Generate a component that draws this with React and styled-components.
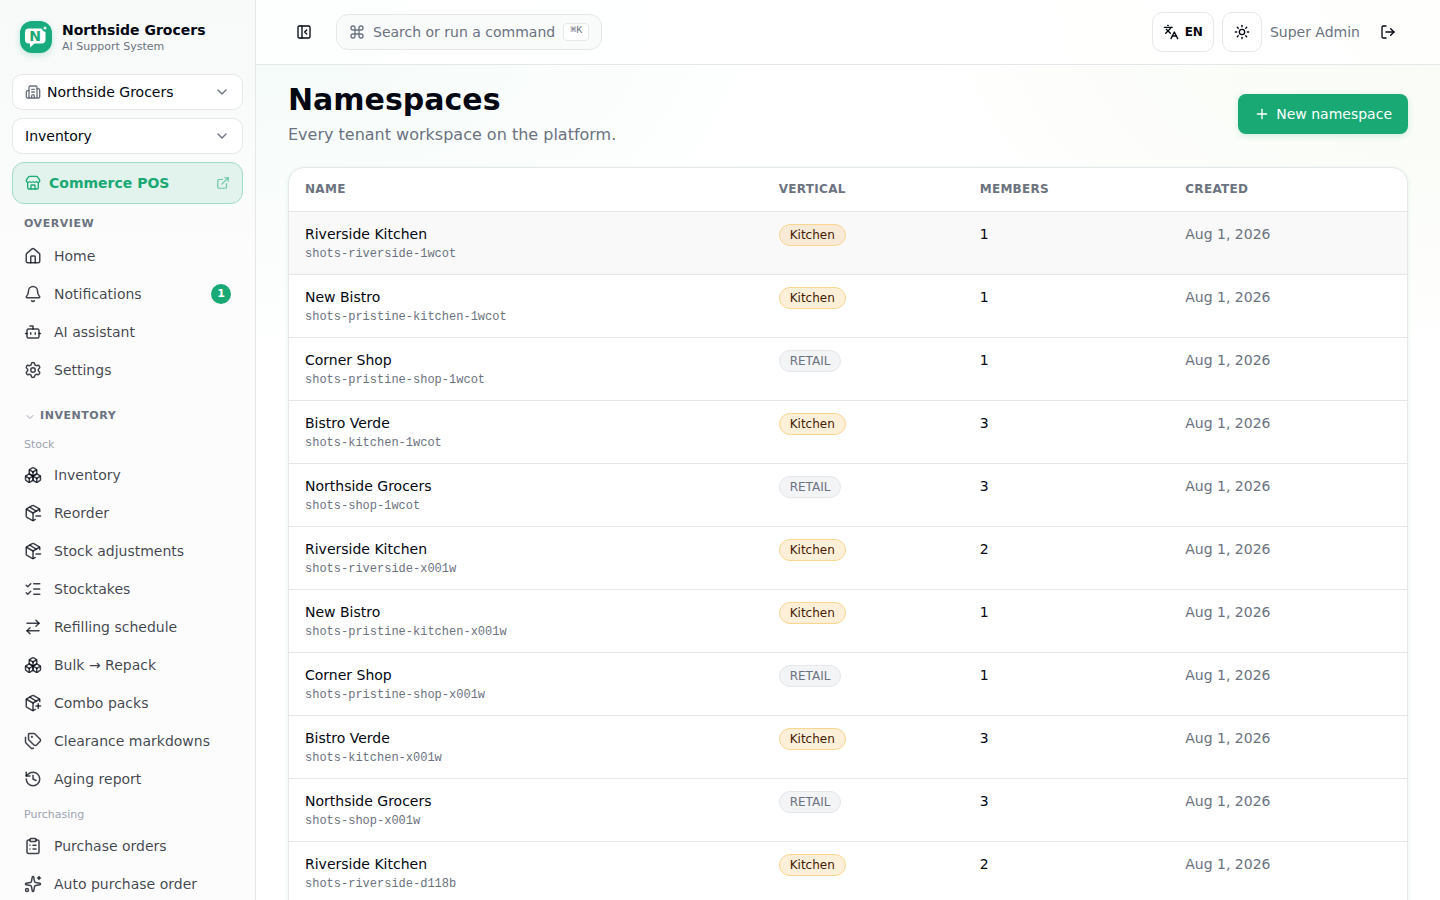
import React from 'react';
import styled, { createGlobalStyle, css } from 'styled-components';
import {
  ArrowRightLeft,
  Bell,
  Bot,
  Boxes,
  Building2,
  ChevronDown,
  ClipboardList,
  Command,
  ExternalLink,
  History,
  House,
  Languages,
  ListChecks,
  LogOut,
  PackageMinus,
  PackagePlus,
  PanelLeftClose,
  Plus,
  Settings,
  Sparkles,
  Store,
  Sun,
} from 'lucide-react';

const colors = {
  ink: '#030712',
  nav: 'rgba(3, 7, 18, 0.76)',
  muted: '#6b7280',
  faint: '#9ca3af',
  line: '#e5e7eb',
  green: '#18a974',
};

const GlobalStyle = createGlobalStyle`
  *, *::before, *::after {
    box-sizing: border-box;
  }
  body {
    margin: 0;
    color: ${colors.ink};
    background: #fff;
    font-family: 'DejaVu Sans', sans-serif;
    font-size: 14px;
    line-height: 20px;
  }
  button, select {
    font: inherit;
    color: inherit;
    cursor: pointer;
  }
  svg {
    display: block;
    flex-shrink: 0;
  }
`;

const Shell = styled.div`
  display: grid;
  grid-template-columns: 256px minmax(0, 1fr);
  height: 100vh;
  overflow: hidden;
`;

const Sidebar = styled.aside`
  display: flex;
  flex-direction: column;
  gap: 8px;
  padding: 12px;
  overflow-y: auto;
  scrollbar-width: none;
  border-right: 1px solid ${colors.line};
  background: linear-gradient(180deg, #f7faf9 0, #fcfcfc 256px);
`;

const Brand = styled.div`
  display: flex;
  align-items: center;
  gap: 10px;
  padding: 8px 8px 12px;
`;

const LogoMark = styled.svg`
  border-radius: 12px;
  box-shadow: 0 2px 6px rgba(24, 169, 116, 0.25);
`;

const BrandName = styled.div`
  font-weight: 700;
`;

const BrandNote = styled.div`
  color: ${colors.muted};
  font-size: 11px;
  line-height: 14px;
`;

const Picker = styled.label`
  display: grid;
  grid-template-columns: auto minmax(0, 1fr) auto;
  align-items: center;
  height: 36px;
  flex-shrink: 0;
  border: 1px solid ${colors.line};
  border-radius: 10px;
  background: #fff;
  color: ${colors.muted};
  > svg {
    grid-row: 1;
    pointer-events: none;
  }
  > svg:first-child {
    grid-column: 1;
    margin-left: 12px;
  }
  > svg:last-child {
    grid-column: 3;
    margin-right: 12px;
  }
`;

const PickerSelect = styled.select`
  grid-row: 1;
  grid-column: 1 / -1;
  height: 34px;
  padding: 0 36px 0 ${({ $icon }) => ($icon ? '34px' : '12px')};
  border: 0;
  border-radius: 10px;
  background: transparent;
  color: ${colors.ink};
  appearance: none;
`;

const PosLink = styled.a`
  display: flex;
  align-items: center;
  gap: 8px;
  height: 42px;
  flex-shrink: 0;
  padding: 0 12px;
  border: 1px solid #a3dcc7;
  border-radius: 12px;
  background: #e2f2ec;
  color: ${colors.green};
  font-weight: 700;
  text-decoration: none;
  > svg:last-child {
    margin-left: auto;
    opacity: 0.6;
  }
`;

const Nav = styled.nav`
  display: flex;
  flex-direction: column;
`;

const groupTitle = css`
  color: ${colors.muted};
  font-size: 11px;
  font-weight: 700;
  line-height: 16px;
  letter-spacing: 0.05em;
  text-transform: uppercase;
`;

const NavTitle = styled.h2`
  ${groupTitle}
  margin: 4px 12px 6px;
`;

const NavToggle = styled.button`
  ${groupTitle}
  display: flex;
  align-items: center;
  gap: 4px;
  margin: 20px 12px 0;
  padding: 0;
  border: 0;
  background: none;
  svg {
    margin-top: 2px;
    color: ${colors.faint};
  }
`;

const NavSubtitle = styled.h3`
  margin: 0 12px;
  padding: ${({ $first }) => ($first ? '13px 0 4px' : '10px 0 5px')};
  color: ${colors.faint};
  font-size: 11px;
  font-weight: 400;
  line-height: 16px;
`;

const NavList = styled.ul`
  display: flex;
  flex-direction: column;
  gap: 2px;
  margin: 0;
  padding: 0;
  list-style: none;
`;

const NavLink = styled.a`
  display: flex;
  align-items: center;
  gap: 12px;
  height: 36px;
  padding: 0 12px;
  border-radius: 10px;
  color: ${colors.nav};
  text-decoration: none;
`;

const Count = styled.span`
  min-width: 20px;
  margin-left: auto;
  border-radius: 10px;
  background: ${colors.green};
  color: #fff;
  font-size: 11px;
  font-weight: 700;
  text-align: center;
`;

const Page = styled.div`
  display: flex;
  flex-direction: column;
  min-width: 0;
  min-height: 0;
  background:
    radial-gradient(560px 380px at 0 0, rgba(24, 169, 116, 0.05), transparent),
    radial-gradient(560px 380px at 100% 0, rgba(130, 190, 70, 0.06), transparent),
    #fff;
`;

const TopBar = styled.header`
  display: flex;
  align-items: center;
  gap: 16px;
  height: 65px;
  flex-shrink: 0;
  padding: 0 32px;
  border-bottom: 1px solid ${colors.line};
  background: rgba(255, 255, 255, 0.8);
`;

const IconButton = styled.button`
  display: flex;
  align-items: center;
  justify-content: center;
  width: ${({ $small }) => ($small ? '32px' : '40px')};
  height: ${({ $small }) => ($small ? '32px' : '40px')};
  padding: 0;
  border: 1px solid ${({ $outlined }) => ($outlined ? colors.line : 'transparent')};
  border-radius: 10px;
  background: ${({ $outlined }) => ($outlined ? '#fff' : 'transparent')};
`;

const LanguageButton = styled(IconButton)`
  gap: 6px;
  width: auto;
  padding: 0 10px;
  font-size: 12px;
  font-weight: 700;
`;

const SearchButton = styled.button`
  display: flex;
  align-items: center;
  gap: 8px;
  height: 36px;
  padding: 0 12px;
  border: 1px solid ${colors.line};
  border-radius: 12px;
  background: #f9fbfa;
  color: ${colors.muted};
`;

const Shortcut = styled.kbd`
  height: 18px;
  padding: 0 6px;
  border: 1px solid ${colors.line};
  border-radius: 4px;
  background: #fff;
  font-family: 'Liberation Mono', monospace;
  font-size: 10px;
  line-height: 14px;
`;

const TopActions = styled.div`
  display: flex;
  align-items: center;
  gap: 8px;
  margin-left: auto;
  color: ${colors.ink};
`;

const UserName = styled.span`
  color: ${colors.muted};
`;

const Main = styled.main`
  flex: 1;
  min-height: 0;
  padding: 16px 32px 32px;
  overflow-y: auto;
  scrollbar-width: none;
`;

const PageHead = styled.div`
  display: flex;
  align-items: center;
  justify-content: space-between;
  margin-bottom: 20px;
`;

const Title = styled.h1`
  margin: 0 0 4px;
  font-size: 30px;
  line-height: 38px;
`;

const Lead = styled.p`
  margin: 0;
  color: ${colors.muted};
  font-size: 16px;
  line-height: 24px;
`;

const PrimaryButton = styled.button`
  display: flex;
  align-items: center;
  gap: 6px;
  height: 40px;
  padding: 0 16px;
  border: 0;
  border-radius: 8px;
  background: ${colors.green};
  color: #fff;
  box-shadow: 0 2px 6px rgba(24, 169, 116, 0.2);
`;

const TableCard = styled.div`
  padding-bottom: 16px;
  overflow: hidden;
  border: 1px solid ${colors.line};
  border-radius: 16px;
  background: #fff;
  box-shadow: 0 1px 4px rgba(24, 169, 116, 0.12);
`;

const Table = styled.table`
  width: 100%;
  border-collapse: collapse;
  text-align: left;
`;

const HeadCell = styled.th`
  height: 43px;
  padding: 0 16px;
  border-bottom: 1px solid ${colors.line};
  color: ${colors.muted};
  font-size: 12px;
  letter-spacing: 0.025em;
  text-transform: uppercase;
`;

const Row = styled.tr`
  border-bottom: 1px solid ${colors.line};
  background: ${({ $active }) => ($active ? '#f9f9f9' : '#fff')};
`;

const Cell = styled.td`
  padding: 12px 16px;
  color: ${({ $muted }) => ($muted ? colors.muted : colors.ink)};
  vertical-align: top;
`;

const Slug = styled.div`
  margin-top: 2px;
  color: ${colors.muted};
  font-family: 'Liberation Mono', monospace;
  font-size: 12px;
  line-height: 16px;
`;

const Badge = styled.span`
  display: inline-block;
  padding: 2px 10px;
  border: 1px solid ${({ $kitchen }) => ($kitchen ? '#fad691' : colors.line)};
  border-radius: 11px;
  background: ${({ $kitchen, $active }) =>
    $kitchen ? ($active ? '#f8ead7' : '#fef0d8') : '#f3f4f6'};
  color: ${({ $kitchen }) => ($kitchen ? '#451a03' : colors.muted)};
  font-size: 12px;
  line-height: 16px;
  vertical-align: top;
`;

const Logo = () => (
  <LogoMark width="32" height="32" viewBox="0 0 32 32" aria-hidden="true">
    <rect width="32" height="32" fill="#18ab80" />
    <path
      d="M9 7.500h12.500a5 5 0 0 0 4 3.500V18.500a4 4 0 0 1-4 4H14.500L10 26.500V22.500H9a4 4 0 0 1-4-4v-7a4 4 0 0 1 4-4z"
      fill="#fff"
    />
    <circle cx="25" cy="7" r="1.600" fill="#d4f3e6" />
    <text
      x="15"
      y="20"
      fill="#18a974"
      fontFamily="DejaVu Sans, sans-serif"
      fontSize="14"
      fontWeight="700"
      textAnchor="middle"
    >
      N
    </text>
  </LogoMark>
);

const PriceTags = ({ size }) => (
  <svg
    width={size}
    height={size}
    viewBox="0 0 24 24"
    fill="none"
    stroke="currentColor"
    strokeWidth="2"
    strokeLinecap="round"
    strokeLinejoin="round"
    aria-hidden="true"
  >
    <path d="M13.172 2a2 2 0 0 1 1.414.586l6.710 6.710a2.400 2.400 0 0 1 0 3.408l-4.592 4.592a2.400 2.400 0 0 1-3.408 0l-6.710-6.710A2 2 0 0 1 6 9.172V3a1 1 0 0 1 1-1z" />
    <path d="M2 7v6.172a2 2 0 0 0 .586 1.414l6.710 6.710a2.400 2.400 0 0 0 3.191.193" />
    <circle cx="10.500" cy="6.500" r=".5" fill="currentColor" />
  </svg>
);

const overview = [
  { label: 'Home', icon: House },
  { label: 'Notifications', icon: Bell, count: 1 },
  { label: 'AI assistant', icon: Bot },
  { label: 'Settings', icon: Settings },
];

const stock = [
  { label: 'Inventory', icon: Boxes },
  { label: 'Reorder', icon: PackageMinus },
  { label: 'Stock adjustments', icon: PackageMinus },
  { label: 'Stocktakes', icon: ListChecks },
  { label: 'Refilling schedule', icon: ArrowRightLeft },
  { label: 'Bulk → Repack', icon: Boxes },
  { label: 'Combo packs', icon: PackagePlus },
  { label: 'Clearance markdowns', icon: PriceTags },
  { label: 'Aging report', icon: History },
];

const purchasing = [
  { label: 'Purchase orders', icon: ClipboardList },
  { label: 'Auto purchase order', icon: Sparkles },
];

const namespaces = [
  { name: 'Riverside Kitchen', slug: 'shots-riverside-1wcot', kitchen: true, members: 1 },
  { name: 'New Bistro', slug: 'shots-pristine-kitchen-1wcot', kitchen: true, members: 1 },
  { name: 'Corner Shop', slug: 'shots-pristine-shop-1wcot', kitchen: false, members: 1 },
  { name: 'Bistro Verde', slug: 'shots-kitchen-1wcot', kitchen: true, members: 3 },
  { name: 'Northside Grocers', slug: 'shots-shop-1wcot', kitchen: false, members: 3 },
  { name: 'Riverside Kitchen', slug: 'shots-riverside-x001w', kitchen: true, members: 2 },
  { name: 'New Bistro', slug: 'shots-pristine-kitchen-x001w', kitchen: true, members: 1 },
  { name: 'Corner Shop', slug: 'shots-pristine-shop-x001w', kitchen: false, members: 1 },
  { name: 'Bistro Verde', slug: 'shots-kitchen-x001w', kitchen: true, members: 3 },
  { name: 'Northside Grocers', slug: 'shots-shop-x001w', kitchen: false, members: 3 },
  { name: 'Riverside Kitchen', slug: 'shots-riverside-d118b', kitchen: true, members: 2 },
];

const NavItems = ({ items }) => (
  <NavList>
    {items.map(({ label, icon: Icon, count }) => (
      <li key={label}>
        <NavLink href="#">
          <Icon size={18} />
          {label}
          {count ? <Count>{count}</Count> : null}
        </NavLink>
      </li>
    ))}
  </NavList>
);

const App = () => (
  <>
    <GlobalStyle />
    <Shell>
      <Sidebar>
        <Brand>
          <Logo />
          <div>
            <BrandName>Northside Grocers</BrandName>
            <BrandNote>AI Support System</BrandNote>
          </div>
        </Brand>
        <Picker>
          <Building2 size={16} />
          <PickerSelect $icon aria-label="Namespace">
            <option>Northside Grocers</option>
          </PickerSelect>
          <ChevronDown size={16} />
        </Picker>
        <Picker>
          <PickerSelect aria-label="Module">
            <option>Inventory</option>
          </PickerSelect>
          <ChevronDown size={16} />
        </Picker>
        <PosLink href="#">
          <Store size={16} />
          Commerce POS
          <ExternalLink size={14} />
        </PosLink>
        <Nav>
          <NavTitle>Overview</NavTitle>
          <NavItems items={overview} />
          <NavToggle type="button">
            <ChevronDown size={12} />
            Inventory
          </NavToggle>
          <NavSubtitle $first>Stock</NavSubtitle>
          <NavItems items={stock} />
          <NavSubtitle>Purchasing</NavSubtitle>
          <NavItems items={purchasing} />
        </Nav>
      </Sidebar>
      <Page>
        <TopBar>
          <IconButton type="button" $small aria-label="Collapse sidebar">
            <PanelLeftClose size={16} />
          </IconButton>
          <SearchButton type="button">
            <Command size={16} />
            Search or run a command
            <Shortcut>⌘K</Shortcut>
          </SearchButton>
          <TopActions>
            <LanguageButton type="button" $outlined>
              <Languages size={16} />
              EN
            </LanguageButton>
            <IconButton type="button" $outlined aria-label="Toggle theme">
              <Sun size={16} />
            </IconButton>
            <UserName>Super Admin</UserName>
            <IconButton type="button" aria-label="Log out">
              <LogOut size={16} />
            </IconButton>
          </TopActions>
        </TopBar>
        <Main>
          <PageHead>
            <div>
              <Title>Namespaces</Title>
              <Lead>Every tenant workspace on the platform.</Lead>
            </div>
            <PrimaryButton type="button">
              <Plus size={16} />
              New namespace
            </PrimaryButton>
          </PageHead>
          <TableCard>
            <Table>
              <thead>
                <tr>
                  <HeadCell>Name</HeadCell>
                  <HeadCell>Vertical</HeadCell>
                  <HeadCell>Members</HeadCell>
                  <HeadCell>Created</HeadCell>
                </tr>
              </thead>
              <tbody>
                {namespaces.map(({ name, slug, kitchen, members }, index) => (
                  <Row key={slug} $active={index === 0}>
                    <Cell>
                      {name}
                      <Slug>{slug}</Slug>
                    </Cell>
                    <Cell>
                      <Badge $kitchen={kitchen} $active={index === 0}>
                        {kitchen ? 'Kitchen' : 'RETAIL'}
                      </Badge>
                    </Cell>
                    <Cell>{members}</Cell>
                    <Cell $muted>Aug 1, 2026</Cell>
                  </Row>
                ))}
              </tbody>
            </Table>
          </TableCard>
        </Main>
      </Page>
    </Shell>
  </>
);

export default App;
